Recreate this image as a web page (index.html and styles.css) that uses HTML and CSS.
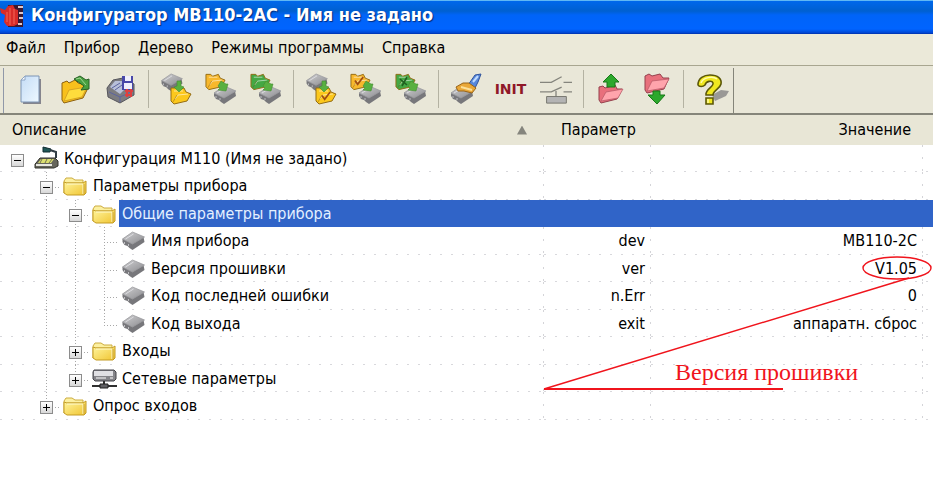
FILE: index.html
```
<!DOCTYPE html>
<html lang="ru">
<head>
<meta charset="utf-8">
<title>Конфигуратор МВ110-2АС - Имя не задано</title>
<link rel="stylesheet" href="styles.css">
</head>
<body>
<svg class="defs" aria-hidden="true">
  <defs>
    <linearGradient id="gold" x1="0" y1="0" x2="1" y2="1"><stop offset="0" stop-color="#fff6a0"/><stop offset="1" stop-color="#f0c430"/></linearGradient>
    <linearGradient id="steel" x1="0" y1="0" x2="1" y2="1"><stop offset="0" stop-color="#d0d0d2"/><stop offset="1" stop-color="#8c8c90"/></linearGradient>
    <linearGradient id="paper" x1="0" y1="0" x2="1" y2="1"><stop offset="0" stop-color="#c4dcf6"/><stop offset="1" stop-color="#eef8ff"/></linearGradient>
    <symbol id="chip" viewBox="0 0 24 20">
      <path d="M1 8 11 2 22 6 23 11 11 19 8 17 6 15 3 14 1 11Z" fill="#77777b"/>
      <path d="M1 8 11 1 23 6 11 13Z" fill="url(#steel)" stroke="#9c9ca0" stroke-width=".8"/>
      <path d="M4 8 12 3" stroke="#dcdce0" fill="none"/>
      <path d="M3 11v2M7 13v2" stroke="#c0c0c4"/>
    </symbol>
    <symbol id="fold" viewBox="0 0 22 18">
      <path d="M1 1 6 1 8 3 14 1 16 5 21 7 17 14 4 17 1 14Z" fill="currentColor" stroke="#946c14"/>
      <path d="M4 4 13 4M5 12 8 8 18 7" fill="none" stroke="#fff" stroke-opacity=".55"/>
      <path d="M3 15 7 8" fill="none" stroke="#704c10" stroke-opacity=".4"/>
    </symbol>
    <symbol id="folder" viewBox="0 0 25 20">
      <path d="M1 17V5L3 2H9L12 4H20V7H4Z" fill="#fcf0a0" stroke="#ccac40"/>
      <path d="M4 7H20L23 5V17L21 19H4L1 17V6Z" fill="url(#gold)" stroke="#c49c24"/>
      <path d="M4 8H20V18" fill="none" stroke="#fffbd0"/>
      <path d="M21 8V18" stroke="#c8a030"/>
    </symbol>
    <symbol id="read" viewBox="0 0 32 32">
      <use href="#chip" x="0" y="0" width="24" height="19"/>
      <use href="#fold" x="10" y="14" width="22" height="18" color="#fcc81c"/>
      <path d="M17 8 21 8 21 13 24 14 19 19 14 14 17 13Z" fill="#58b040" stroke="#448c30" stroke-width=".6"/>
    </symbol>
    <symbol id="write" viewBox="0 0 32 32">
      <use href="#fold" x="0" y="0" width="21" height="18"/>
      <use href="#chip" x="8" y="12" width="24" height="20"/>
      <path d="M16 8 21 11 23 11 21 18 13 17 15 15 13 13Z" fill="#58b040" stroke="#448c30" stroke-width=".6"/>
    </symbol>
    <symbol id="tick" viewBox="0 0 12 12"><path d="M1 5 4 9 10 1" fill="none" stroke="#a04c14" stroke-width="1.8"/></symbol>
  </defs>
</svg>

<div class="window">
  <header class="titlebar">
    <svg class="logo" width="24" height="24" viewBox="0 0 24 24" aria-hidden="true">
      <path d="M8 2H23V24H8Z" fill="#3a1830"/>
      <path d="M0 5 5 7 8 3 13 2 15 6 18 7 18 21 14 23H7L4 19 5 12 1 10Z" fill="#d82c28"/>
      <path d="M10 5V22M14 6V21M7 9V19" stroke="#f46858"/>
      <path d="M18 4H23M19 10H23M19 15H23M18 21H22" stroke="#e0c8c8" stroke-width="2"/>
    </svg>
    <h1 class="title">Конфигуратор МВ110-2АС - Имя не задано</h1>
  </header>

  <nav class="menu">
    <button>Файл</button><button>Прибор</button><button>Дерево</button><button>Режимы программы</button><button>Справка</button>
  </nav>

  <div class="toolbar" role="toolbar">
    <div class="tools">
      <button aria-label="Новый"><svg viewBox="0 0 32 32"><path d="M9 6H26V31H8Z" fill="#85858d"/><path d="M10 3H24V29H6V7Z" fill="url(#paper)" stroke="#7c94b4"/><path d="M6 7H10V3Z" fill="#fff" stroke="#8ca4c4"/></svg></button>
      <button aria-label="Открыть"><svg viewBox="0 0 32 32"><path d="M2 10 7 8 9 10 15 7 18 10 26 12 28 15 23 25 4 30 2 27Z" fill="#f8c01c" stroke="#8c6010"/><path d="M4 28 9 17 27 14 22 24Z" fill="#ffdc3c" stroke="#c89420" stroke-width=".7"/><path d="M14 6 20 3 26 7 29 6 29 16 21 17 24 13Z" fill="#48a040" stroke="#286024"/><path d="M16 6 20 5 26 12" fill="none" stroke="#a0d890"/></svg></button>
      <button aria-label="Сохранить"><svg viewBox="0 0 32 32"><path d="M2 15 8 7 18 5 29 11V22L15 30 3 24Z" fill="#7c7c80" stroke="#55555c"/><path d="M5 14 10 8 17 8 19 17 15 21Z" fill="#b8c0d8"/><path d="M7 15 15 10M10 17 17 12M4 19 15 24V29M15 24 28 18" stroke="#5c64a0" fill="none"/><path d="M17 3H28V17H17Z" fill="#4848a8"/><path d="M20 3H26V8H20ZM19 10H27V16H19Z" fill="#f0f0fc"/><path d="M20 18H28M20 22H27M22 16V24M26 16V24" stroke="#dc4040" stroke-width="2"/></svg></button>
      <span class="sep"></span>
      <button aria-label="Считать"><svg viewBox="0 0 32 32"><use href="#read"/></svg></button>
      <button class="gold" aria-label="Записать"><svg viewBox="0 0 32 32"><use href="#write"/></svg></button>
      <button class="green" aria-label="Записать изменённые"><svg viewBox="0 0 32 32"><use href="#write"/></svg></button>
      <span class="sep"></span>
      <button aria-label="Считать ветку"><svg viewBox="0 0 32 32"><use href="#read"/><use href="#tick" x="16" y="18" width="11" height="11"/></svg></button>
      <button class="gold" aria-label="Записать ветку"><svg viewBox="0 0 32 32"><use href="#write"/><use href="#tick" x="4" y="3" width="11" height="11"/></svg></button>
      <button class="green" aria-label="Записать изменённые ветки"><svg viewBox="0 0 32 32"><use href="#write"/><path d="M5 6 12 12M12 4 7 13" stroke="#206020" stroke-width="1.6"/></svg></button>
      <span class="sep"></span>
      <button aria-label="Очистить"><svg viewBox="0 0 32 32"><use href="#chip" x="0" y="12" width="24" height="20"/><path d="M18 12 25 2 31 1 28 9 25 15Z" fill="#5888dc" stroke="#30549c"/><path d="M23 9 28 3" stroke="#c0dcff" stroke-width="2"/><path d="M6 14 13 10 19 10 26 15 22 20 14 18 8 18Z" fill="#eaa838" stroke="#986418"/><path d="M11 14 22 17" stroke="#fce098" stroke-width="2"/></svg></button>
      <button class="init">INIT</button>
      <button aria-label="Сеть"><svg viewBox="0 0 34 32"><path d="M0 9H12L23 3M25 9H34M0 19H12L23 14M25 19H34M17 18V24" fill="none" stroke="#85857d" stroke-width="1.4"/><path d="M7 24H28V31H7Z" fill="#b4b4b4" stroke="#74746c"/></svg></button>
      <span class="sep"></span>
      <button aria-label="Загрузить"><svg viewBox="0 0 32 32"><path d="M4 14 8 13 10 15 20 12 22 16 27 16 22 26 6 30 4 27Z" fill="#e8707c" stroke="#94404c"/><path d="M6 28 11 19 28 16 23 25Z" fill="#ffa4ac" stroke="#b45864" stroke-width=".7"/><path d="M16 1 24 9H20V14H12V9H8Z" fill="#2ca82c" stroke="#187818"/></svg></button>
      <button aria-label="Выгрузить"><svg viewBox="0 0 32 32"><path d="M5 3 9 1 12 3 20 1 23 5 29 5 24 16 7 20 5 17Z" fill="#e8707c" stroke="#94404c"/><path d="M7 18 12 8 29 6 24 15Z" fill="#ffa4ac" stroke="#b45864" stroke-width=".7"/><path d="M13 18H20V22H25L17 31 8 22H13Z" fill="#2ca82c" stroke="#187818"/></svg></button>
      <span class="sep"></span>
      <button aria-label="Помощь"><svg viewBox="0 0 32 32"><path d="M17 22 26 17 34 18 31 23 20 28Z" fill="#77777b" opacity=".7"/><path d="M3 12C3 5 9 2 15 2 23 2 27 6 26 11 25 16 18 17 18 22H11C10 16 19 14 18 10 17 7 11 8 10 12 8 14 4 14 3 12ZM11 25H18V31H11Z" fill="#f0e820" stroke="#5c5808" stroke-width="1.6"/><path d="M6 10C8 4 18 3 22 6M13 26V30" fill="none" stroke="#fffcb0" stroke-width="1.4"/></svg></button>
    </div>
  </div>

  <main class="view">
    <table class="params">
      <colgroup><col><col class="c-param"><col class="c-value"></colgroup>
      <thead>
        <tr><th><span class="sorted">Описание <i class="arrow"></i></span></th><th class="h-param">Параметр</th><th class="h-value">Значение</th></tr>
      </thead>
      <tbody>
        <tr><td><div class="node"><span class="g"><button class="exp" aria-label="Свернуть"></button></span><span class="ico"><svg width="26" height="26" viewBox="0 0 26 26" aria-hidden="true"><path d="M2 17 6 12H21L24 15V20L20 22H1V18Z" fill="#66665c" stroke="#33332c"/><path d="M4 17 7 13H20L17 17Z" fill="#dce070"/><path d="M8 13 6 17M13 13 11 17M18 13 15 17" stroke="#707050"/><path d="M2 19H18" stroke="#e8e8e0" stroke-width="2"/><path d="M9 1 17 3 16 6 9 6Z" fill="#205858" stroke="#102c30"/><path d="M16 4 22 6 22 12" fill="none" stroke="#303c44" stroke-width="2"/></svg></span><span class="label">Конфигурация М110 (Имя не задано)</span></div></td><td></td><td></td></tr>
        <tr><td><div class="node"><span class="g"></span><span class="g v h"><button class="exp" aria-label="Свернуть"></button></span><span class="ico"><svg width="25" height="20"><use href="#folder"/></svg></span><span class="label">Параметры прибора</span></div></td><td></td><td></td></tr>
        <tr class="selected"><td><div class="node"><span class="g"></span><span class="g v"></span><span class="g v h"><button class="exp" aria-label="Свернуть"></button></span><span class="ico"><svg width="25" height="20"><use href="#folder"/></svg></span><span class="label">Общие параметры прибора</span></div></td><td></td><td></td></tr>
        <tr><td><div class="node"><span class="g"></span><span class="g v"></span><span class="g v"></span><span class="g v h"></span><span class="ico"><svg width="25" height="20"><use href="#chip"/></svg></span><span class="label">Имя прибора</span></div></td><td>dev</td><td>МВ110-2С</td></tr>
        <tr><td><div class="node"><span class="g"></span><span class="g v"></span><span class="g v"></span><span class="g v h"></span><span class="ico"><svg width="25" height="20"><use href="#chip"/></svg></span><span class="label">Версия прошивки</span></div></td><td>ver</td><td>V1.05</td></tr>
        <tr><td><div class="node"><span class="g"></span><span class="g v"></span><span class="g v"></span><span class="g v h"></span><span class="ico"><svg width="25" height="20"><use href="#chip"/></svg></span><span class="label">Код последней ошибки</span></div></td><td>n.Err</td><td>0</td></tr>
        <tr><td><div class="node"><span class="g"></span><span class="g v"></span><span class="g v"></span><span class="g v h end"></span><span class="ico"><svg width="25" height="20"><use href="#chip"/></svg></span><span class="label">Код выхода</span></div></td><td>exit</td><td>аппаратн. сброс</td></tr>
        <tr><td><div class="node"><span class="g"></span><span class="g v"></span><span class="g v h"><button class="exp plus" aria-label="Развернуть"></button></span><span class="ico"><svg width="25" height="20"><use href="#folder"/></svg></span><span class="label">Входы</span></div></td><td></td><td></td></tr>
        <tr><td><div class="node"><span class="g"></span><span class="g v"></span><span class="g v h end"><button class="exp plus" aria-label="Развернуть"></button></span><span class="ico"><svg width="25" height="20" viewBox="0 0 25 20" aria-hidden="true"><path d="M2 1H22L24 3V10L22 12H3L1 10V3Z" fill="#85858a" stroke="#44444a"/><path d="M2 2H21V7H2Z" fill="#e0e0e4"/><path d="M4 9H14M18 9H21" stroke="#fff"/><path d="M12 12V17M0 17H8M16 17H25" stroke="#303030" stroke-width="2"/><path d="M8 15H16V19H8Z" fill="#606064" stroke="#202020"/></svg></span><span class="label">Сетевые параметры</span></div></td><td></td><td></td></tr>
        <tr><td><div class="node"><span class="g"></span><span class="g v h end"><button class="exp plus" aria-label="Развернуть"></button></span><span class="ico"><svg width="25" height="20"><use href="#folder"/></svg></span><span class="label">Опрос входов</span></div></td><td></td><td></td></tr>
      </tbody>
    </table>
    <div class="callout">
      <svg width="390" height="136" viewBox="0 0 390 136" aria-hidden="true">
        <g fill="none" stroke="#f0141c"><ellipse cx="354" cy="13" rx="34" ry="11" stroke-width="1.4"/><path d="M366 23 1 134" stroke-width="1.4"/><path d="M1 134H240" stroke-width="2"/></g>
      </svg>
      <span class="note">Версия прошивки</span>
    </div>
  </main>
</div>
</body>
</html>
```
FILE: styles.css
```
* { box-sizing: border-box; }

body {
  margin: 0;
  background: #fff;
  color: #000;
  font: 16px/20px "DejaVu Sans Condensed", "DejaVu Sans", sans-serif;
}

button {
  margin: 0;
  padding: 0;
  border: 0;
  background: none;
  color: inherit;
  font: inherit;
}

.defs { position: absolute; width: 0; height: 0; }

.window { margin-right: 3px; }

.titlebar {
  display: flex;
  align-items: center;
  gap: 7px;
  height: 34px;
  padding-bottom: 4px;
  border-top: 1px solid #60b8f4;
  border-bottom: 1px solid #0038b8;
  background: linear-gradient(#0068ec, #0060d0 10px, #0064f8 14px, #0064ff 28px, #0044d0);
}

.title {
  margin: 0;
  color: #fff;
  font: bold 18px/24px "DejaVu Sans Condensed", "DejaVu Sans", sans-serif;
  text-shadow: 1px 1px 1px #002c80;
}

.menu {
  display: flex;
  align-items: center;
  gap: 18px;
  height: 31px;
  padding: 0 6px 3px;
  background: #ebe9d9;
}

.toolbar {
  height: 50px;
  padding: 2px 3px 0;
  border-top: 1px solid #a8a690;
  border-bottom: 2px solid #85857a;
  background: #e9e7d8;
}

.tools {
  display: flex;
  align-items: center;
  width: max-content;
  height: 45px;
  padding: 0 0 4px 4px;
  border-left: 1px solid #9098a8;
  border-right: 1px solid #85857a;
}

.tools button { display: flex; justify-content: center; width: 45px; }
.tools svg { width: 32px; height: 32px; overflow: visible; }
.tools .gold { color: #f8b82c; }
.tools .green { color: #44a844; }
.tools .init { color: #901828; font: bold 14px/20px "DejaVu Sans", sans-serif; }

.sep { width: 10px; height: 38px; background: linear-gradient(#b4b2a2, #b4b2a2) 5px 0 / 1px 100% no-repeat; }

.view { position: relative; }

.params { width: 100%; border-collapse: collapse; table-layout: fixed; }
.c-param { width: 107px; }
.c-value { width: 282px; }

th {
  height: 30px;
  padding: 0 22px 0 12px;
  background: #e8e6d6;
  font-weight: normal;
  text-align: left;
}
.params .h-param { padding: 0 0 0 17px; }
.params .h-value { text-align: right; }
.sorted { display: flex; align-items: center; justify-content: space-between; }
.arrow { width: 10px; height: 9px; margin-right: -5px; background: #85857d; clip-path: polygon(50% 0, 100% 100%, 0 100%); }

tbody tr { height: 27px; }
tbody tr:nth-child(even) { height: 28px; }

td {
  height: inherit;
  padding: 0 6px 0 0;
  background:
    repeating-linear-gradient(90deg, #d8d8dc 0 2px, transparent 2px 11px) 0 100% / 100% 1px no-repeat,
    repeating-linear-gradient(#d4d4d8 0 2px, transparent 2px 12px) 100% 0 / 1px 100% no-repeat;
  text-align: right;
}
td:first-child { padding: 0; }
td:last-child { padding-right: 16px; background-position: 0 100%, calc(100% - 10px) 0; }

.node { display: flex; align-items: stretch; height: inherit; padding-left: 3px; text-align: left; }

.g { display: flex; align-items: center; justify-content: center; flex: none; width: 29px; background-repeat: no-repeat; }
.v { background-image: repeating-linear-gradient(#a8a8a8 0 1px, transparent 1px 3px); background-size: 1px 100%; background-position: 14px 0; }
.h {
  background-image:
    repeating-linear-gradient(#a8a8a8 0 1px, transparent 1px 3px),
    repeating-linear-gradient(90deg, #a8a8a8 0 1px, transparent 1px 3px);
  background-size: 1px 100%, 15px 1px;
  background-position: 14px 0, 14px 15px;
}
.end { background-size: 1px 15px, 15px 1px; }

.exp {
  width: 13px;
  height: 13px;
  margin-top: 3px;
  border: 1px solid #8c8c8c;
  background: linear-gradient(#000, #000) center / 7px 1px no-repeat, linear-gradient(#fff, #d8d8d8);
}
.exp.plus { background: linear-gradient(#000, #000) center / 7px 1px no-repeat, linear-gradient(#000, #000) center / 1px 7px no-repeat, linear-gradient(#fff, #d8d8d8); }

.ico { display: flex; align-items: center; justify-content: center; flex: none; width: 29px; }
.label { display: flex; align-items: center; flex: 1; padding-left: 3px; white-space: nowrap; }

.selected .label, .selected td + td { background: #3064c8; color: #e4f0ff; }

.callout { position: absolute; top: 140px; right: 0; }
.callout svg { display: block; }
.note { position: absolute; top: 105px; left: 132px; color: #f0141c; font: 24px/24px "Liberation Serif", serif; white-space: nowrap; }
```
